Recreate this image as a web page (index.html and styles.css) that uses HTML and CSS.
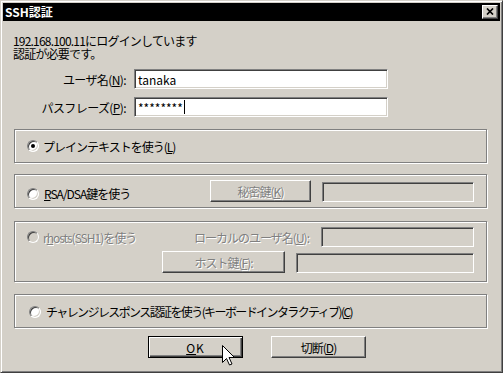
FILE: index.html
```html
<!DOCTYPE html>
<html lang="ja">
<head>
<meta charset="utf-8">
<title>SSH認証</title>
<link rel="stylesheet" href="styles.css">
</head>
<body>
<div class="window">
  <div class="titlebar">
    <span class="title">SSH認証</span>
    <span class="close"><svg width="8" height="7" viewBox="0 0 8 7"><path d="M1 0.5L7 6.5M7 0.5L1 6.5" stroke="#000" stroke-width="1.7" fill="none"/></svg></span>
  </div>
  <div class="content">
    <div class="info">
      <div class="line">192.168.100.11にログインしています</div>
      <div class="line">認証が必要です。</div>
    </div>
    <div class="field first">
      <span class="flabel">ユーザ名(<u>N</u>):</span>
      <div class="input">tanaka</div>
    </div>
    <div class="field second">
      <span class="flabel">パスフレーズ(<u>P</u>):</span>
      <div class="input">********<span class="caret"></span></div>
    </div>

    <div class="group g1">
      <div class="row">
        <span class="radio checked"></span>
        <span class="rlabel">プレインテキストを使う(<u>L</u>)</span>
      </div>
    </div>

    <div class="group g2">
      <div class="row">
        <div class="choice">
          <span class="radio"></span>
          <span class="rlabel"><u>R</u>SA/DSA鍵を使う</span>
        </div>
        <div class="btn disabled key-btn">秘密鍵(<u>K</u>)</div>
        <div class="input disabled key-input"></div>
      </div>
    </div>

    <div class="group g3">
      <div class="row">
        <div class="choice">
          <span class="radio disabled"></span>
          <span class="rlabel dis">r<u>h</u>osts(SSH1)を使う</span>
        </div>
        <span class="local-label dis">ローカルのユーザ名(<u>U</u>):</span>
        <div class="input disabled local-input"></div>
      </div>
      <div class="row row2">
        <div class="btn disabled host-btn">ホスト鍵(<u>F</u>):</div>
        <div class="input disabled host-input"></div>
      </div>
    </div>

    <div class="group g4">
      <div class="row">
        <span class="radio"></span>
        <span class="rlabel long">チャレンジレスポンス認証を使う(キーボードインタラクティブ)(<u>C</u>)</span>
      </div>
    </div>

    <div class="buttons">
      <div class="btn default"><u>O</u>K</div>
      <div class="btn">切断(<u>D</u>)</div>
    </div>
  </div>
  <svg class="cursor" width="13" height="21" viewBox="0 0 13 21">
    <path d="M0.5 0.5V17.5L4.5 13.5L7.5 20L10 19L7 12.5H12.5Z" fill="#fff" stroke="#000" stroke-width="1" stroke-linejoin="miter"/>
  </svg>
</div>
</body>
</html>
```

FILE: styles.css
```css
* { box-sizing: border-box; }

html, body {
  margin: 0;
  padding: 0;
  background: #d4d0c8;
}

body {
  font-family: "Noto Sans CJK JP", "Noto Sans", sans-serif;
  font-size: 12px;
  line-height: 13px;
  color: #000;
  letter-spacing: -1px;
}

u { text-decoration: underline; text-underline-offset: 1px; }

.window {
  position: relative;
  width: 503px;
  height: 373px;
  background: #d4d0c8;
  border: 1px solid;
  border-color: #d4d0c8 #404040 #404040 #d4d0c8;
  box-shadow: inset 1px 1px 0 #fff, inset -1px -1px 0 #808080;
  padding: 2px;
  overflow: hidden;
}

.titlebar {
  height: 18px;
  background: #000;
  display: flex;
  align-items: center;
  justify-content: space-between;
  padding: 0 2px;
}

.title {
  color: #fff;
  font-weight: bold;
  letter-spacing: 0;
  line-height: 18px;
}

.close {
  width: 16px;
  height: 14px;
  background: #d4d0c8;
  border: 1px solid;
  border-color: #fff #404040 #404040 #fff;
  box-shadow: inset -1px -1px 0 #808080;
  display: flex;
  align-items: center;
  justify-content: center;
  padding: 0 1px 1px 0;
}
.close svg { display: block; }

.content {
  padding: 13px 0 0 10px;
}

.info { letter-spacing: -0.8px; }
.info .line { height: 13px; white-space: nowrap; }

.field {
  display: flex;
  align-items: center;
  height: 20px;
}
.field.first { margin-top: 9px; }
.field.second { margin-top: 8px; }

.flabel {
  width: 113px;
  text-align: right;
  margin-right: 8px;
  white-space: nowrap;
  letter-spacing: -0.6px;
}

.input {
  height: 20px;
  background: #fff;
  border: 1px solid;
  border-color: #808080 #fff #fff #808080;
  box-shadow: inset 1px 1px 0 #404040, inset -1px -1px 0 #d4d0c8;
  padding: 0 3px;
  display: flex;
  align-items: center;
  letter-spacing: 0;
  white-space: nowrap;
}
.field .input { width: 254px; }
.input.disabled { background: #d4d0c8; }

.caret {
  display: inline-block;
  width: 1px;
  height: 14px;
  background: #000;
  margin-left: 1px;
}

.group {
  margin-left: 1px;
  width: 473px;
  border: 1px solid #808080;
  box-shadow: inset 1px 1px 0 #fff, 1px 1px 0 #fff;
  padding: 0 12px;
}
.g1 { margin-top: 12px; height: 34px; display: flex; align-items: center; }
.g2 { margin-top: 11px; height: 34px; padding-top: 5px; }
.g3 { margin-top: 13px; height: 61px; padding-top: 5px; }
.g4 { margin-top: 12px; height: 34px; display: flex; align-items: center; padding-left: 14px; padding-top: 1px; }

.row {
  display: flex;
  align-items: center;
  width: 100%;
}

.choice {
  flex: 1;
  display: flex;
  align-items: center;
}

.radio {
  flex: none;
  position: relative;
  width: 12px;
  height: 12px;
  border-radius: 50%;
  border: 1px solid;
  border-color: #808080 #fff #fff #808080;
  box-shadow: inset 1px 1px 0 #404040, inset -1px -1px 0 #d4d0c8;
  background: #fff;
}
.radio.checked::after {
  content: "";
  position: absolute;
  left: 3px;
  top: 3px;
  width: 4px;
  height: 4px;
  border-radius: 50%;
  background: #000;
}
.radio.disabled { background: #d4d0c8; }

.rlabel {
  margin-left: 4px;
  white-space: nowrap;
}
.g2 .rlabel { margin-left: 5px; }
.g4 .rlabel { margin-left: 5px; }
.rlabel.long { letter-spacing: -1.6px; }

.dis, .btn.disabled {
  color: #808080;
  text-shadow: 1px 1px 0 #fff;
}
.btn.disabled u { text-decoration-color: #808080; }

.btn {
  height: 22px;
  width: 95px;
  display: flex;
  align-items: center;
  justify-content: center;
  background: #d4d0c8;
  border: 1px solid;
  border-color: #fff #404040 #404040 #fff;
  box-shadow: inset -1px -1px 0 #808080;
  white-space: nowrap;
  flex: none;
}

.btn.default {
  border-color: #000;
  box-shadow: inset 1px 1px 0 #fff, inset -1px -1px 0 #404040, inset -2px -2px 0 #808080;
  letter-spacing: 1px;
}

.key-btn { width: 101px; height: 22px; }
.key-input { width: 152px; margin-left: 11px; height: 20px; }
.g2 .row { align-items: flex-start; }
.g2 .choice { margin-top: 7px; }
.g2 .key-input { margin-top: 2px; }

.local-label { margin-right: 12px; white-space: nowrap; }
.local-input { width: 153px; }

.row2 {
  justify-content: flex-end;
  align-items: flex-start;
  margin-top: 4px;
}
.host-btn { width: 123px; }
.host-input { width: 178px; margin-left: 11px; margin-top: 2px; }

.buttons {
  margin-top: 8px;
  padding-left: 135px;
  display: flex;
  gap: 28px;
}

.cursor {
  position: absolute;
  left: 221px;
  top: 344px;
}
```
